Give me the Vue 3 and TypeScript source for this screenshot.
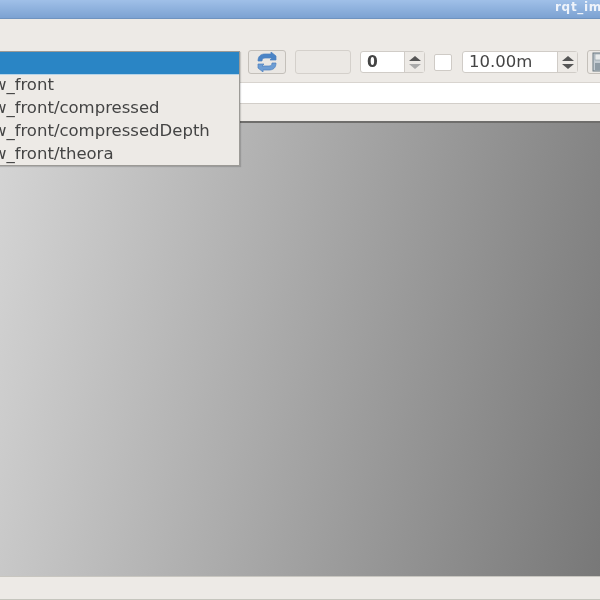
<script setup lang="ts">
const topics: string[] = ['raw_front', 'raw_front/compressed', 'raw_front/compressedDepth', 'raw_front/theora']
</script>

<template>
  <div class="window">
    <header class="titlebar"><span class="title">rqt_image_view</span></header>
    <div class="toolbar">
      <div class="combo-space"></div>
      <button class="btn refresh">
        <svg width="22" height="20" viewBox="0 0 22 20">
          <path d="M2 9 C2 4 5 2 9 2 L15 2 L15 0 L20 4 L20 8 L14 8 L16 6 L9 6 C7 6 6 7 6 9 Z" fill="#4a84c6" stroke="#4a80bd" stroke-width=".7" />
          <path d="M20 11 C20 16 17 18 13 18 L7 18 L7 20 L2 16 L2 12 L8 12 L6 14 L13 14 C15 14 16 13 16 11 Z" fill="#6d9dd4" stroke="#4a80bd" stroke-width=".7" />
        </svg>
      </button>
      <div class="btn blank"></div>
      <div class="spin small">
        <span class="value">0</span>
        <span class="arrows"><i class="up"></i><i class="down faint"></i></span>
      </div>
      <div class="check"></div>
      <div class="spin wide">
        <span class="value">10.00m</span>
        <span class="arrows"><i class="up"></i><i class="down"></i></span>
      </div>
      <button class="btn save">
        <svg width="18" height="20" viewBox="0 0 18 20">
          <rect x="1" y="1" width="16" height="18" fill="#c4ccd2" stroke="#6b7880" />
          <rect x="3" y="2" width="12" height="6" fill="#e8ebeb" stroke="#8d99a1" stroke-width=".6" />
          <rect x="3" y="11" width="12" height="7" fill="#8f9ca5" />
        </svg>
      </button>
    </div>
    <div class="topic-row"><div class="topic-input"></div></div>
    <main class="canvas"></main>
    <footer class="statusbar"></footer>

    <div class="popup">
      <div class="selected"></div>
      <div v-for="topic in topics" :key="topic" class="item">{{ topic }}</div>
    </div>
  </div>
</template>

<style scoped>
.window {
  position: relative;
  width: 600px;
  height: 600px;
  overflow: hidden;
  display: flex;
  flex-direction: column;
  background: #edeae6;
  font-family: "DejaVu Sans", sans-serif;
  color: #444;
  filter: blur(0.7px);
}
.titlebar {
  height: 19px;
  flex: none;
  box-sizing: border-box;
  padding-left: 555px;
  background: linear-gradient(#a0c0e8, #7ca2d2);
  border-bottom: 1px solid #6f93bf;
  white-space: nowrap;
  overflow: hidden;
}
.title {
  color: #eef3fa;
  font-size: 12px;
  font-weight: 700;
  letter-spacing: 0.7px;
  line-height: 15px;
  display: block;
}
.toolbar {
  height: 24px;
  flex: none;
  margin-top: 31px;
  display: flex;
  align-items: center;
}
.combo-space { width: 248px; flex: none; }
.btn {
  box-sizing: border-box;
  height: 24px;
  padding: 0;
  display: flex;
  align-items: center;
  justify-content: center;
  flex: none;
  background: #edeae6;
  border: 1px solid #d4d0cb;
  border-radius: 3px;
}
.refresh { width: 38px; border-color: #c4c0ba; background: #eae7e3; }
.blank { width: 56px; margin-left: 9px; background: #ebe8e4; }
.spin {
  box-sizing: border-box;
  height: 22px;
  flex: none;
  display: flex;
  background: #fff;
  border: 1px solid #d0ccc7;
  border-radius: 3px;
}
.small { width: 65px; margin-left: 9px; }
.wide { width: 116px; margin-left: 10px; }
.value {
  flex: 1;
  padding-left: 6px;
  font-size: 16.5px;
  line-height: 20px;
  color: #444;
}
.small .value { font-weight: 700; font-size: 15.5px; }
.arrows {
  width: 19px;
  display: flex;
  flex-direction: column;
  align-items: center;
  justify-content: center;
  gap: 3px;
  background: #edeae6;
  border-left: 1px solid #d0ccc7;
}
.arrows i {
  width: 0;
  height: 0;
  border-left: 6px solid transparent;
  border-right: 6px solid transparent;
}
.up { border-bottom: 5px solid #555; }
.down { border-top: 5px solid #555; }
.faint { border-top-color: #aaa; }
.check {
  box-sizing: border-box;
  width: 18px;
  height: 17px;
  flex: none;
  margin-left: 9px;
  background: #fff;
  border: 1px solid #cfcbc6;
  border-radius: 2px;
}
.save {
  width: 30px;
  margin-left: 9px;
  border-color: #c4c0ba;
  justify-content: flex-start;
  padding-left: 4px;
}
.topic-row { flex: none; height: 22px; margin-top: 8px; }
.topic-input {
  height: 22px;
  box-sizing: border-box;
  background: #fff;
  border-top: 1px solid #d8d4cf;
  border-bottom: 1px solid #d2cec9;
}
.canvas {
  flex: 1;
  border-top: 2px solid #6f6e6c;
  margin-top: 17px;
  background: linear-gradient(102deg, #d5d5d5 0%, #787878 100%);
}
.statusbar {
  height: 24px;
  flex: none;
  background: #edeae6;
  border-top: 1px solid #c8c6c0;
  border-bottom: 1px solid #c5c5bd;
  box-sizing: border-box;
}
.popup {
  position: absolute;
  left: -26px;
  top: 51px;
  width: 266px;
  height: 115px;
  box-sizing: border-box;
  background: #edeae6;
  border: 1px solid #9c9a96;
  box-shadow: 1px 1px 1px rgba(0, 0, 0, 0.15);
}
.selected {
  height: 22px;
  background: #2a85c5;
  border-bottom: 1px solid #b5d3e8;
}
.item {
  height: 23px;
  line-height: 20px;
  padding-left: 1px;
  font-size: 16.5px;
  color: #444;
  white-space: nowrap;
}
</style>
